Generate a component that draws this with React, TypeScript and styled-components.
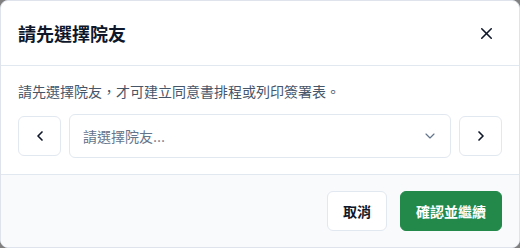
import React from 'react';
import styled, { createGlobalStyle } from 'styled-components';
import { ChevronDown, ChevronLeft, ChevronRight, X } from 'lucide-react';

const GlobalStyle = createGlobalStyle`
  html, body {
    margin: 0;
    padding: 0;
    background: #808080;
  }
  body {
    font-family: Inter, "Noto Sans CJK TC", sans-serif;
  }
`;

/**
 * Select Resident Dialog
 */
const App = () => {
  return (
    <>
      <GlobalStyle />
      <Dialog>
        <Header>
          <Title>請先選擇院友</Title>
          <CloseButton aria-label="關閉">
            <X size={19} strokeWidth={2} />
          </CloseButton>
        </Header>
        <Body>
          <Hint>請先選擇院友，才可建立同意書排程或列印簽署表。</Hint>
          <Row>
            <NavButton aria-label="上一位">
              <ChevronLeft size={16} strokeWidth={2.5} />
            </NavButton>
            <Select>
              <Placeholder>請選擇院友...</Placeholder>
              <ChevronDown size={16} strokeWidth={1.75} color="#64748b" />
            </Select>
            <NavButton aria-label="下一位">
              <ChevronRight size={16} strokeWidth={2.5} />
            </NavButton>
          </Row>
        </Body>
        <Footer>
          <Button>取消</Button>
          <Button $primary>確認並繼續</Button>
        </Footer>
      </Dialog>
    </>
  );
};

/**
 * Styled Components
 */
const Dialog = styled.div`
  width: 520px;
  height: 248px;
  box-sizing: border-box;
  background: #ffffff;
  border: 1px solid #dfe4ec;
  border-radius: 8px;
  overflow: hidden;
  display: flex;
  flex-direction: column;
`;

const Header = styled.div`
  height: 64px;
  flex-shrink: 0;
  display: flex;
  align-items: center;
  justify-content: space-between;
  padding: 0 17px 0 17px;
  border-bottom: 1px solid #e2e8f0;
`;

const Title = styled.h2`
  margin: 0;
  font-size: 18px;
  font-weight: 700;
  color: #0f172a;
`;

const CloseButton = styled.button`
  display: flex;
  align-items: center;
  justify-content: center;
  width: 28px;
  height: 28px;
  padding: 0;
  border: none;
  background: transparent;
  color: #0f172a;
  margin-right: 2px;
`;

const Body = styled.div`
  display: flex;
  flex-direction: column;
  gap: 12px;
  padding: 16px 17px 16px 17px;
`;

const Hint = styled.p`
  margin: 0;
  font-size: 14px;
  line-height: 20px;
  color: #475569;
`;

const Row = styled.div`
  display: flex;
  align-items: center;
  gap: 8px;
`;

const NavButton = styled.button`
  flex-shrink: 0;
  width: 43px;
  height: 40px;
  display: flex;
  align-items: center;
  justify-content: center;
  padding: 0;
  background: #ffffff;
  border: 1px solid #e2e8f0;
  border-radius: 6px;
  color: #0f172a;
`;

const Select = styled.div`
  flex: 1;
  height: 44px;
  box-sizing: border-box;
  display: flex;
  align-items: center;
  justify-content: space-between;
  padding: 0 12px 0 13px;
  border: 1px solid #e2e8f0;
  border-radius: 6px;
  background: #ffffff;
`;

const Placeholder = styled.span`
  font-size: 14px;
  color: #64748b;
`;

const Footer = styled.div`
  flex: 1;
  display: flex;
  align-items: center;
  justify-content: flex-end;
  gap: 13px;
  padding: 0 17px;
  background: #f8fafc;
  border-top: 1px solid #e2e8f0;
`;

const Button = styled.button<{ $primary?: boolean }>`
  height: 40px;
  padding: 0 15px;
  border-radius: 6px;
  font-family: Inter, "Noto Sans CJK TC", sans-serif;
  font-size: 14px;
  font-weight: 700;
  border: 1px solid ${(p) => (p.$primary ? '#22894a' : '#e2e8f0')};
  background: ${(p) => (p.$primary ? '#22894a' : '#ffffff')};
  color: ${(p) => (p.$primary ? '#ffffff' : '#0f172a')};
`;

export default App;
